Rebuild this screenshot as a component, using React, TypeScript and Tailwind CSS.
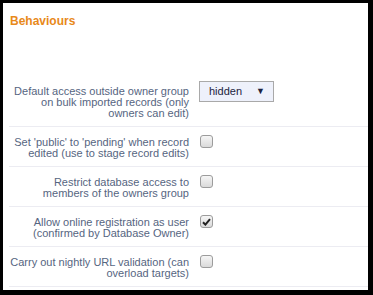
const rows: { label: string[]; control: "select" | "off" | "on" }[] = [
  {
    label: ["Default access outside owner group", "on bulk imported records (only", "owners can edit)"],
    control: "select",
  },
  { label: ["Set 'public' to 'pending' when record", "edited (use to stage record edits)"], control: "off" },
  { label: ["Restrict database access to", "members of the owners group"], control: "off" },
  { label: ["Allow online registration as user", "(confirmed by Database Owner)"], control: "on" },
  { label: ["Carry out nightly URL validation (can", "overload targets)"], control: "off" },
]

const Checkbox = ({ checked }: { checked: boolean }) => (
  <span className="ml-[1px] flex h-[13px] w-[13px] items-center justify-center rounded-[3px] border border-[#9c9c9c] bg-gradient-to-b from-[#f6f6f6] to-[#dadada]">
    {checked && (
      <svg width="9" height="8" viewBox="0 0 9 8">
        <path d="M1 4.2 L3.4 6.6 L8 1.2" stroke="#222" strokeWidth="2" fill="none" />
      </svg>
    )}
  </span>
)

const Select = () => (
  <div className="-mt-[3px] flex h-[21px] w-[75px] items-center justify-between border border-[#a9a9a9] bg-[#eef1fb] pl-[9px] pr-[8px] text-[11px] text-[#1c2340]">
    <span>hidden</span>
    <span className="text-[9px]">▼</span>
  </div>
)

export default function App() {
  return (
    <div className="h-[295px] w-[373px] bg-black pb-[5px] pl-[3px] pr-[5px] pt-[3px] font-['Liberation_Sans',Arial,sans-serif]">
      <div className="flex h-full flex-col bg-white pl-[6px]">
        <h2 className="pl-[1px] pt-[11px] text-[12px] font-bold leading-[14px] text-[#e8891a]">Behaviours</h2>
        <div className="mt-[48px]">
          {rows.map((r, i) => (
            <div key={i} className="flex border-b border-[#ececf2] pb-[7px] pt-[8px]">
              <div className="w-[180px] pt-[2px] text-right text-[11px] leading-[11px] text-[#56657f]">
                {r.label.map((l, j) => (
                  <div key={j}>{l}</div>
                ))}
              </div>
              <div className="ml-[10px]">
                {r.control === "select" ? <Select /> : <Checkbox checked={r.control === "on"} />}
              </div>
            </div>
          ))}
        </div>
      </div>
    </div>
  )
}
